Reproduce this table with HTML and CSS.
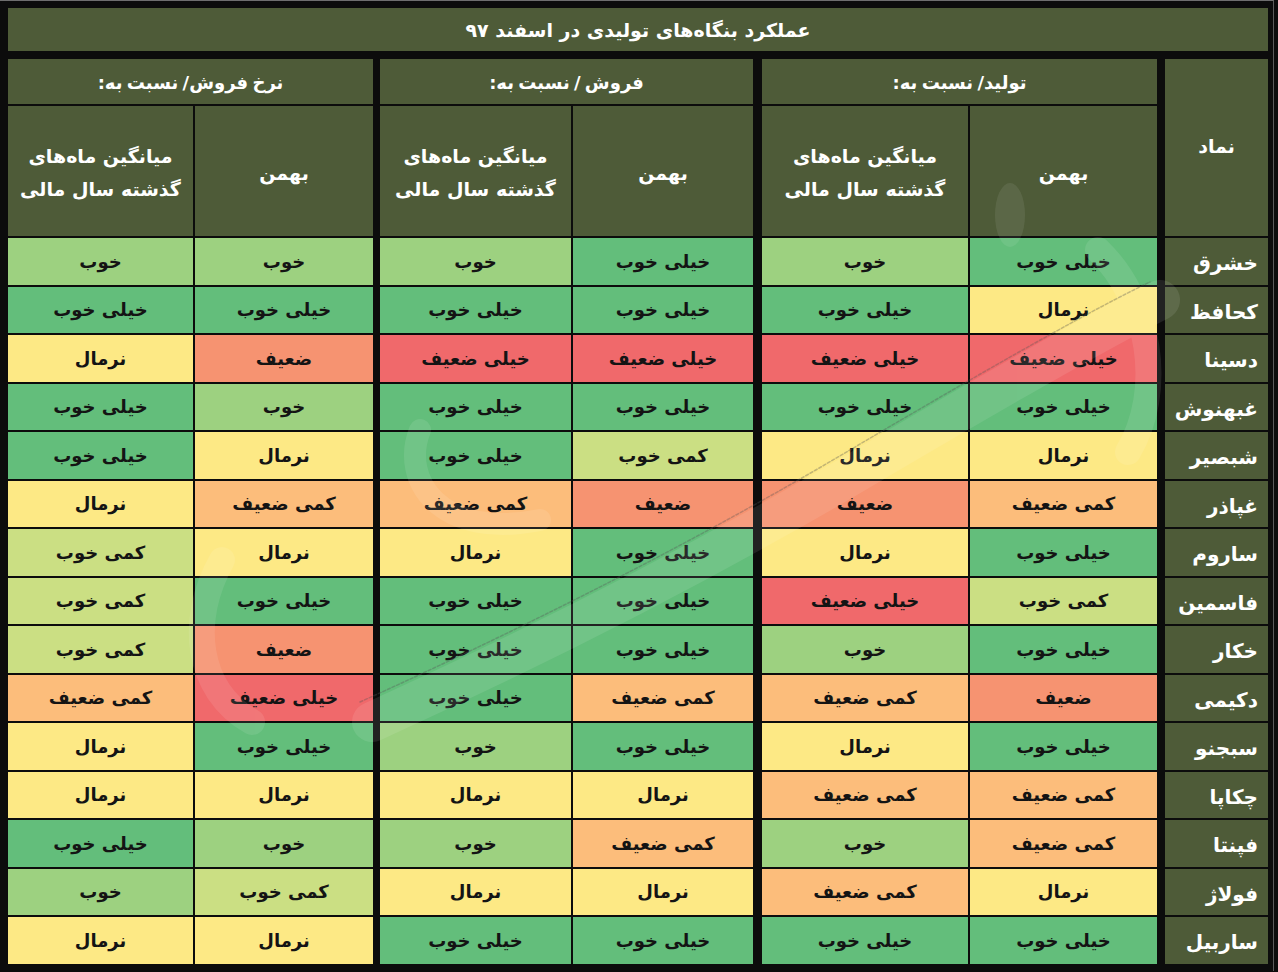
FILE: index.html
```html
<!DOCTYPE html>
<html lang="fa">
<head>
<meta charset="utf-8">
<title>عملکرد بنگاه‌های تولیدی در اسفند ۹۷</title>
<link rel="stylesheet" href="styles.css">
</head>
<body>
<div class="frame">
  <div class="title">عملکرد بنگاه‌های تولیدی در اسفند ۹۷</div>
  <div class="table">
    <div class="hd sym-hd">نماد</div>
    <div class="hd grp g1">تولید/ نسبت به:</div>
    <div class="hd grp g2">فروش / نسبت به:</div>
    <div class="hd grp g3">نرخ فروش/ نسبت به:</div>
    <div class="hd sub c1">بهمن</div>
    <div class="hd sub c2">میانگین ماه‌های<br>گذشته سال مالی</div>
    <div class="hd sub c3">بهمن</div>
    <div class="hd sub c4">میانگین ماه‌های<br>گذشته سال مالی</div>
    <div class="hd sub c5">بهمن</div>
    <div class="hd sub c6">میانگین ماه‌های<br>گذشته سال مالی</div>

    <div class="sym">خشرق</div>
    <div class="v c1 vg">خیلی خوب</div><div class="v c2 g">خوب</div><div class="v c3 vg">خیلی خوب</div><div class="v c4 g">خوب</div><div class="v c5 g">خوب</div><div class="v c6 g">خوب</div>

    <div class="sym">کحافظ</div>
    <div class="v c1 n">نرمال</div><div class="v c2 vg">خیلی خوب</div><div class="v c3 vg">خیلی خوب</div><div class="v c4 vg">خیلی خوب</div><div class="v c5 vg">خیلی خوب</div><div class="v c6 vg">خیلی خوب</div>

    <div class="sym">دسینا</div>
    <div class="v c1 vw">خیلی ضعیف</div><div class="v c2 vw">خیلی ضعیف</div><div class="v c3 vw">خیلی ضعیف</div><div class="v c4 vw">خیلی ضعیف</div><div class="v c5 w">ضعیف</div><div class="v c6 n">نرمال</div>

    <div class="sym">غبهنوش</div>
    <div class="v c1 vg">خیلی خوب</div><div class="v c2 vg">خیلی خوب</div><div class="v c3 vg">خیلی خوب</div><div class="v c4 vg">خیلی خوب</div><div class="v c5 g">خوب</div><div class="v c6 vg">خیلی خوب</div>

    <div class="sym">شبصیر</div>
    <div class="v c1 n">نرمال</div><div class="v c2 n">نرمال</div><div class="v c3 sg">کمی خوب</div><div class="v c4 vg">خیلی خوب</div><div class="v c5 n">نرمال</div><div class="v c6 vg">خیلی خوب</div>

    <div class="sym">غپاذر</div>
    <div class="v c1 sw">کمی ضعیف</div><div class="v c2 w">ضعیف</div><div class="v c3 w">ضعیف</div><div class="v c4 sw">کمی ضعیف</div><div class="v c5 sw">کمی ضعیف</div><div class="v c6 n">نرمال</div>

    <div class="sym">ساروم</div>
    <div class="v c1 vg">خیلی خوب</div><div class="v c2 n">نرمال</div><div class="v c3 vg">خیلی خوب</div><div class="v c4 n">نرمال</div><div class="v c5 n">نرمال</div><div class="v c6 sg">کمی خوب</div>

    <div class="sym">فاسمین</div>
    <div class="v c1 sg">کمی خوب</div><div class="v c2 vw">خیلی ضعیف</div><div class="v c3 vg">خیلی خوب</div><div class="v c4 vg">خیلی خوب</div><div class="v c5 vg">خیلی خوب</div><div class="v c6 sg">کمی خوب</div>

    <div class="sym">خکار</div>
    <div class="v c1 vg">خیلی خوب</div><div class="v c2 g">خوب</div><div class="v c3 vg">خیلی خوب</div><div class="v c4 vg">خیلی خوب</div><div class="v c5 w">ضعیف</div><div class="v c6 sg">کمی خوب</div>

    <div class="sym">دکیمی</div>
    <div class="v c1 w">ضعیف</div><div class="v c2 sw">کمی ضعیف</div><div class="v c3 sw">کمی ضعیف</div><div class="v c4 vg">خیلی خوب</div><div class="v c5 vw">خیلی ضعیف</div><div class="v c6 sw">کمی ضعیف</div>

    <div class="sym">سبجنو</div>
    <div class="v c1 vg">خیلی خوب</div><div class="v c2 n">نرمال</div><div class="v c3 vg">خیلی خوب</div><div class="v c4 g">خوب</div><div class="v c5 vg">خیلی خوب</div><div class="v c6 n">نرمال</div>

    <div class="sym">چکاپا</div>
    <div class="v c1 sw">کمی ضعیف</div><div class="v c2 sw">کمی ضعیف</div><div class="v c3 n">نرمال</div><div class="v c4 n">نرمال</div><div class="v c5 n">نرمال</div><div class="v c6 n">نرمال</div>

    <div class="sym">فپنتا</div>
    <div class="v c1 sw">کمی ضعیف</div><div class="v c2 g">خوب</div><div class="v c3 sw">کمی ضعیف</div><div class="v c4 g">خوب</div><div class="v c5 g">خوب</div><div class="v c6 vg">خیلی خوب</div>

    <div class="sym">فولاژ</div>
    <div class="v c1 n">نرمال</div><div class="v c2 sw">کمی ضعیف</div><div class="v c3 n">نرمال</div><div class="v c4 n">نرمال</div><div class="v c5 sg">کمی خوب</div><div class="v c6 g">خوب</div>

    <div class="sym">ساربیل</div>
    <div class="v c1 vg">خیلی خوب</div><div class="v c2 vg">خیلی خوب</div><div class="v c3 vg">خیلی خوب</div><div class="v c4 vg">خیلی خوب</div><div class="v c5 n">نرمال</div><div class="v c6 n">نرمال</div>
  </div>
  <svg class="watermark" width="1278" height="972" viewBox="0 0 1278 972" aria-hidden="true">
    <g fill="none" stroke-linecap="round">
      <g stroke="#ffffff" opacity="0.09">
        <path d="M 372 722 Q 640 600 860 470 T 1160 300" stroke-width="40"/>
        <path d="M 1098 250 C 1150 300 1165 390 1128 452" stroke-width="26"/>
        <path d="M 222 560 C 188 620 196 690 252 722" stroke-width="26"/>
        <path d="M 420 430 C 400 480 440 540 540 520" stroke-width="22"/>
      </g>
      <path d="M 360 702 Q 630 580 850 450 T 1150 282" stroke="#555" stroke-width="1.5" opacity="0.35" stroke-dasharray="3 2"/>
    </g>
    <ellipse cx="1010" cy="215" rx="15" ry="32" fill="#ffffff" opacity="0.08"/>
  </svg>
</div>
</body>
</html>
```

FILE: styles.css
```css
html, body {
  margin: 0;
  padding: 0;
  background: #0c0c0c;
}

body {
  font-family: "DejaVu Sans", "Noto Sans", sans-serif;
  width: 1278px;
  height: 972px;
  overflow: hidden;
}

.frame {
  position: relative;
  width: 1274px;
  height: 971px;
  box-sizing: border-box;
  border-top: 1px solid #6e6e6e;
  border-right: 1px solid #5a5a5a;
  padding: 7px 5px 0 7px;
  direction: rtl;
}

.title {
  height: 43px;
  background: #4e5b38;
  color: #fff;
  font-size: 19px;
  font-weight: bold;
  display: flex;
  align-items: center;
  justify-content: center;
  margin-bottom: 8px;
  margin-left: 1px;
}

.table {
  display: grid;
  grid-template-columns: 103px 4px 187px 206px 5px 180px 191px 3px 178px 185px;
  grid-template-rows: 45px 130px repeat(15, 46.5px);
  gap: 2px;
  width: 1260px;
  margin-left: 1px;
  background: #0c0c0c;
}

.hd {
  background: #4e5b38;
  color: #fff;
  display: flex;
  align-items: center;
  justify-content: center;
  text-align: center;
  font-size: 19px;
  font-weight: bold;
}

.sym-hd { grid-column: 1; grid-row: 1 / span 2; padding-bottom: 4px; }
.grp { font-size: 18px; word-spacing: -2px; padding-top: 2px; }
.g1 { grid-column: 3 / span 2; grid-row: 1; }
.g2 { grid-column: 6 / span 2; grid-row: 1; }
.g3 { grid-column: 9 / span 2; grid-row: 1; }
.sub { grid-row: 2; line-height: 33px; padding-top: 4px; }

.c1 { grid-column: 3; }
.c2 { grid-column: 4; }
.c3 { grid-column: 6; }
.c4 { grid-column: 7; }
.c5 { grid-column: 9; }
.c6 { grid-column: 10; }

.sym {
  grid-column: 1;
  background: #4e5b38;
  color: #fff;
  font-size: 20px;
  font-weight: bold;
  display: flex;
  align-items: center;
  justify-content: flex-start;
  padding-right: 10px;
  padding-top: 4px;
}

.v {
  display: flex;
  align-items: center;
  justify-content: center;
  color: #141414;
  font-size: 18px;
  font-weight: bold;
}

.vg { background: #63be7b; }
.g  { background: #9dd180; }
.sg { background: #cbdf83; }
.n  { background: #fde985; }
.sw { background: #fcbd7b; }
.w  { background: #f69371; }
.vw { background: #f0696b; }

.watermark {
  position: absolute;
  left: 0;
  top: -1px;
  pointer-events: none;
}
```
